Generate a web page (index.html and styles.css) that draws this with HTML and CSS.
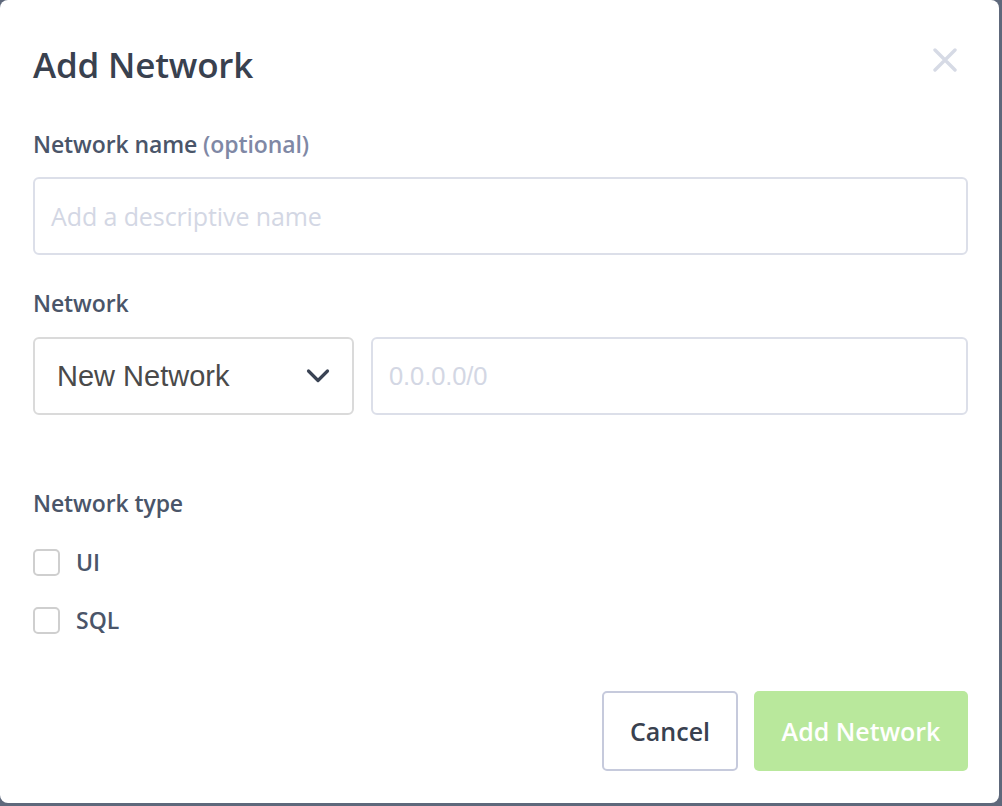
FILE: index.html
```html
<!DOCTYPE html>
<html lang="en">
<head>
<meta charset="utf-8">
<title>Add Network</title>
<link rel="stylesheet" href="styles.css">
</head>
<body>
<div class="modal">
  <header class="modal-header">
    <h1 class="modal-title">Add Network</h1>
    <button class="close-btn" aria-label="Close">
      <svg width="24" height="24" viewBox="0 0 24 24"><path d="M2 2 L22 22 M22 2 L2 22" stroke="#d6dae5" stroke-width="3.4" stroke-linecap="round" fill="none"/></svg>
    </button>
  </header>

  <div class="field field-name">
    <label class="label">Network name <span class="optional">(optional)</span></label>
    <div class="input"><span class="placeholder">Add a descriptive name</span></div>
  </div>

  <div class="field field-network">
    <label class="label">Network</label>
    <div class="row">
      <div class="select">
        <span class="select-text">New Network</span>
        <svg width="24" height="16" viewBox="0 0 24 16"><path d="M2.5 3 L12 12.5 L21.5 3" stroke="#3a4354" stroke-width="3.2" stroke-linecap="round" stroke-linejoin="round" fill="none"/></svg>
      </div>
      <div class="input input-cidr"><span class="placeholder placeholder-cidr">0.0.0.0/0</span></div>
    </div>
  </div>

  <div class="field field-type">
    <label class="label">Network type</label>
    <div class="checks">
      <div class="check"><span class="box"></span><span class="check-label">UI</span></div>
      <div class="check"><span class="box"></span><span class="check-label">SQL</span></div>
    </div>
  </div>

  <footer class="modal-footer">
    <button class="btn btn-cancel">Cancel</button>
    <button class="btn btn-primary">Add Network</button>
  </footer>
</div>
</body>
</html>
```

FILE: styles.css
```css
html, body {
  margin: 0;
  padding: 0;
}
body {
  background: #5e687b;
  width: 1002px;
  height: 806px;
  overflow: hidden;
  font-family: "Open Sans", "Noto Sans", sans-serif;
}
.modal {
  box-sizing: border-box;
  width: 999px;
  height: 803px;
  background: #ffffff;
  border-radius: 8px;
  padding: 0 31px 0 33px;
  display: flex;
  flex-direction: column;
}
.modal-header {
  display: flex;
  justify-content: space-between;
  align-items: flex-start;
  padding-top: 40px;
  height: 92px;
  box-sizing: border-box;
}
.modal-title {
  margin: 0;
  font-size: 35px;
  font-weight: 600;
  line-height: 50px;
  color: #39414f;
  letter-spacing: -0.2px;
}
.close-btn {
  border: 0;
  background: none;
  padding: 0;
  margin: 8px 11px 0 0;
  width: 24px;
  height: 24px;
  display: block;
}
.close-btn svg { display: block; }

.label {
  display: block;
  font-size: 23px;
  font-weight: 600;
  color: #4a5569;
  line-height: 28px;
  letter-spacing: -0.1px;
}
.optional {
  color: #7f88a5;
}
.field-name { margin-top: 38px; }
.field-name .input { margin-top: 19px; }

.input {
  box-sizing: border-box;
  height: 78px;
  border: 2px solid #dcdfe9;
  border-radius: 6px;
  display: flex;
  align-items: center;
  padding-left: 16px;
}
.placeholder {
  font-size: 25px;
  color: #d3d7e4;
  letter-spacing: -0.1px;
}

.field-network { margin-top: 34px; }
.row {
  margin-top: 20px;
  display: flex;
  gap: 17px;
}
.select {
  box-sizing: border-box;
  width: 321px;
  height: 78px;
  border: 2px solid #dadada;
  border-radius: 6px;
  display: flex;
  align-items: center;
  justify-content: space-between;
  padding: 0 22px 0 22px;
}
.select-text {
  font-family: "Liberation Sans", Arial, sans-serif;
  font-size: 29px;
  color: #4a4a4a;
}
.select svg { display: block; }
.input-cidr {
  flex: 1;
  padding-left: 16px;
}
.placeholder-cidr {
  font-family: "Liberation Sans", Arial, sans-serif;
  font-size: 25.5px;
}

.field-type { margin-top: 74px; }
.checks {
  margin-top: 32px;
  display: flex;
  flex-direction: column;
  gap: 32px;
}
.check {
  display: flex;
  align-items: center;
  gap: 16px;
  height: 26px;
}
.box {
  box-sizing: border-box;
  width: 27px;
  height: 27px;
  border: 2px solid #cfcfcf;
  border-radius: 5px;
  background: #fff;
}
.check-label {
  font-size: 23px;
  font-weight: 600;
  color: #4a5569;
}

.modal-footer {
  margin-top: auto;
  margin-bottom: 32px;
  display: flex;
  justify-content: flex-end;
  gap: 16px;
}
.btn {
  box-sizing: border-box;
  height: 80px;
  border-radius: 5px;
  font-family: "Open Sans", "Noto Sans", sans-serif;
  font-size: 25px;
  font-weight: 600;
  padding: 0;
  cursor: pointer;
}
.btn-cancel {
  width: 136px;
  background: #fff;
  border: 2px solid #c6cadc;
  color: #39414f;
}
.btn-primary {
  width: 214px;
  background: #b9e89c;
  border: 0;
  color: #ffffff;
}
```
